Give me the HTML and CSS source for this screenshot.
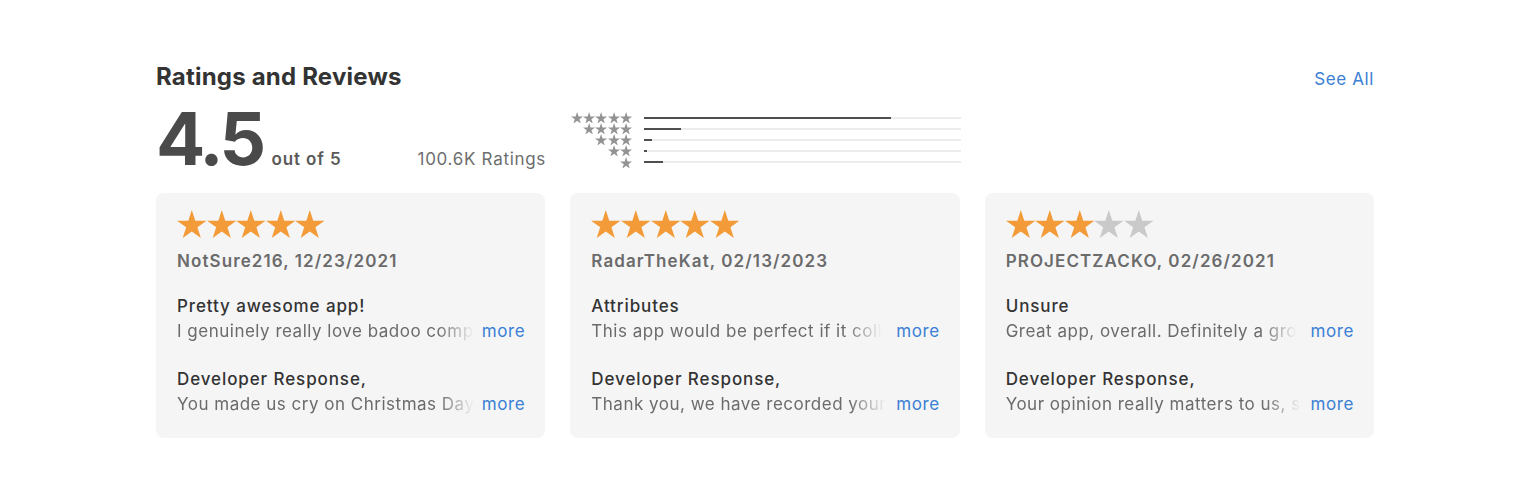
FILE: index.html
```html
<!DOCTYPE html>
<html lang="en">
<head>
    <meta charset="UTF-8">
    <meta name="viewport" content="width=device-width, initial-scale=1.0">
    <title>Ratings and Reviews</title>
    <link rel="stylesheet" href="styles.css">
</head>
<body>
    <svg width="0" height="0" class="defs">
        <symbol id="star" viewBox="0 0 20 19">
            <polygon points="10,0 12.36,7.26 20,7.26 13.81,11.74 16.17,19 10,14.51 3.83,19 6.19,11.74 0,7.26 7.64,7.26"/>
        </symbol>
    </svg>

    <section class="ratings">
        <div class="header">
            <h2>Ratings and Reviews</h2>
            <a href="#" class="see-all">See All</a>
        </div>

        <div class="summary">
            <div class="score">
                <div class="average">
                    <span class="big">4.5</span>
                    <span class="out-of">out of 5</span>
                </div>
                <span class="count">100.6K Ratings</span>
            </div>

            <div class="histogram">
                <div class="hist-row">
                    <div class="hist-stars">
                        <svg><use href="#star"/></svg><svg><use href="#star"/></svg><svg><use href="#star"/></svg><svg><use href="#star"/></svg><svg><use href="#star"/></svg>
                    </div>
                    <div class="track"><div class="fill" style="width: 77.8%"></div></div>
                </div>
                <div class="hist-row">
                    <div class="hist-stars">
                        <svg><use href="#star"/></svg><svg><use href="#star"/></svg><svg><use href="#star"/></svg><svg><use href="#star"/></svg>
                    </div>
                    <div class="track"><div class="fill" style="width: 11.7%"></div></div>
                </div>
                <div class="hist-row">
                    <div class="hist-stars">
                        <svg><use href="#star"/></svg><svg><use href="#star"/></svg><svg><use href="#star"/></svg>
                    </div>
                    <div class="track"><div class="fill" style="width: 2.6%"></div></div>
                </div>
                <div class="hist-row">
                    <div class="hist-stars">
                        <svg><use href="#star"/></svg><svg><use href="#star"/></svg>
                    </div>
                    <div class="track"><div class="fill" style="width: 0.8%"></div></div>
                </div>
                <div class="hist-row">
                    <div class="hist-stars">
                        <svg><use href="#star"/></svg>
                    </div>
                    <div class="track"><div class="fill" style="width: 6%"></div></div>
                </div>
            </div>
        </div>

        <div class="reviews">
            <div class="card">
                <div class="stars">
                    <svg class="on"><use href="#star"/></svg><svg class="on"><use href="#star"/></svg><svg class="on"><use href="#star"/></svg><svg class="on"><use href="#star"/></svg><svg class="on"><use href="#star"/></svg>
                </div>
                <div class="author">NotSure216, 12/23/2021</div>
                <div class="title">Pretty awesome app!</div>
                <div class="line">
                    <span class="snippet">I genuinely really love badoo comp</span>
                    <a href="#" class="more">more</a>
                </div>
                <div class="title dev">Developer Response,</div>
                <div class="line">
                    <span class="snippet">You made us cry on Christmas Day</span>
                    <a href="#" class="more">more</a>
                </div>
            </div>

            <div class="card">
                <div class="stars">
                    <svg class="on"><use href="#star"/></svg><svg class="on"><use href="#star"/></svg><svg class="on"><use href="#star"/></svg><svg class="on"><use href="#star"/></svg><svg class="on"><use href="#star"/></svg>
                </div>
                <div class="author">RadarTheKat, 02/13/2023</div>
                <div class="title">Attributes</div>
                <div class="line">
                    <span class="snippet">This app would be perfect if it coll</span>
                    <a href="#" class="more">more</a>
                </div>
                <div class="title dev">Developer Response,</div>
                <div class="line">
                    <span class="snippet">Thank you, we have recorded your</span>
                    <a href="#" class="more">more</a>
                </div>
            </div>

            <div class="card">
                <div class="stars">
                    <svg class="on"><use href="#star"/></svg><svg class="on"><use href="#star"/></svg><svg class="on"><use href="#star"/></svg><svg><use href="#star"/></svg><svg><use href="#star"/></svg>
                </div>
                <div class="author">PROJECTZACKO, 02/26/2021</div>
                <div class="title">Unsure</div>
                <div class="line">
                    <span class="snippet">Great app, overall. Definitely a gro</span>
                    <a href="#" class="more">more</a>
                </div>
                <div class="title dev">Developer Response,</div>
                <div class="line">
                    <span class="snippet">Your opinion really matters to us, s</span>
                    <a href="#" class="more">more</a>
                </div>
            </div>
        </div>
    </section>
</body>
</html>
```

FILE: styles.css
```css
body {
    margin: 0;
    font-family: Inter, "Noto Sans", sans-serif;
    background-color: #ffffff;
    color: #333333;
}
.defs {
    position: absolute;
}
.ratings {
    padding: 63px 166px 0 156px;
}
.header {
    display: flex;
    justify-content: space-between;
    align-items: baseline;
}
.header h2 {
    margin: 0;
    font-size: 24px;
    line-height: 28px;
    font-weight: 700;
    color: #333333;
    letter-spacing: 0.2px;
}
.see-all {
    color: #3b80d4;
    text-decoration: none;
    font-size: 17px;
    letter-spacing: 0.6px;
}
.summary {
    display: flex;
    gap: 25px;
    margin-top: 10px;
}
.score {
    width: 390px;
    display: flex;
    justify-content: space-between;
    align-items: baseline;
}
.average {
    display: flex;
    align-items: baseline;
    gap: 9px;
}
.big {
    font-size: 73px;
    line-height: 76px;
    font-weight: 700;
    color: #4a4a4a;
    letter-spacing: -3.7px;
}
.out-of {
    font-size: 17px;
    font-weight: 600;
    color: #5a5a5a;
    letter-spacing: 0.9px;
}
.count {
    font-size: 17px;
    color: #6e6e6e;
    letter-spacing: 0.7px;
}
.histogram {
    width: 390px;
    padding-top: 11px;
}
.hist-row {
    display: flex;
    align-items: center;
    gap: 12px;
    height: 11.2px;
}
.hist-stars {
    width: 61px;
    display: flex;
    justify-content: flex-end;
}
.hist-stars svg {
    width: 12.2px;
    height: 11.6px;
    fill: #939393;
}
.track {
    flex: 1;
    height: 2px;
    background: #ececec;
}
.fill {
    height: 2px;
    background: #4f4f4f;
}
.reviews {
    display: grid;
    grid-template-columns: repeat(3, minmax(0, 1fr));
    gap: 25px;
    margin-top: 16px;
}
.card {
    background: #f5f5f6;
    border-radius: 8px;
    padding: 17px 20px 21px 21px;
    letter-spacing: 0.9px;
}
.stars {
    display: flex;
    height: 28px;
}
.stars svg {
    width: 29.6px;
    height: 28px;
    fill: #c9c9c9;
}
.stars svg.on {
    fill: #f29b38;
}
.author {
    margin-top: 10px;
    font-size: 17px;
    line-height: 26px;
    font-weight: 600;
    color: #6b6b6b;
    letter-spacing: 1.1px;
}
.title {
    margin-top: 19px;
    font-size: 17px;
    line-height: 26px;
    font-weight: 500;
    color: #333333;
}
.title.dev {
    margin-top: 22px;
}
.line {
    display: flex;
    justify-content: space-between;
    margin-top: -1px;
    font-size: 17px;
    line-height: 26px;
    color: #6b6b6b;
}
.snippet {
    min-width: 0;
    overflow: hidden;
    white-space: nowrap;
    letter-spacing: 0.5px;
    -webkit-mask-image: linear-gradient(to right, #000 calc(100% - 36px), transparent);
    mask-image: linear-gradient(to right, #000 calc(100% - 36px), transparent);
}
.more {
    color: #3b80d4;
    text-decoration: none;
    margin-left: 4px;
    letter-spacing: 0.6px;
}
```
